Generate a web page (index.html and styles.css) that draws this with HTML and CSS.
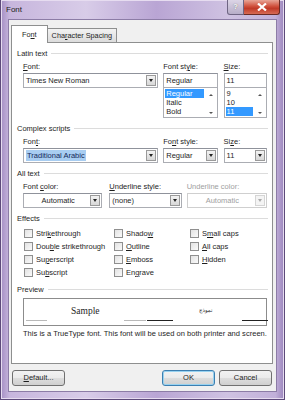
FILE: index.html
```html
<!DOCTYPE html>
<html lang="en">

<head>
    <meta charset="UTF-8">
    <title>Font</title>
    <link rel="stylesheet" href="styles.css">
</head>

<body>
    <div class="window">
        <div class="titlebar">
            <span class="title">Font</span>
            <div class="caption-btns">
                <span class="help">?</span>
                <span class="close">
                    <svg width="10" height="8" viewBox="0 0 10 8">
                        <path d="M1 0.5 L9 7.5 M9 0.5 L1 7.5" stroke="#fff" stroke-width="2.2" />
                    </svg>
                </span>
            </div>
        </div>

        <div class="client">
            <div class="tabs">
                <div class="tab active">Fo<u>n</u>t</div>
                <div class="tab">Cha<u>r</u>acter Spacing</div>
            </div>

            <div class="panel">
                <!-- Latin text -->
                <div class="heading">Latin text</div>
                <div class="row">
                    <div class="field f-font">
                        <div class="label"><u>F</u>ont:</div>
                        <div class="select">
                            <span class="value">Times New Roman</span>
                            <span class="drop"></span>
                        </div>
                    </div>
                    <div class="field f-style">
                        <div class="label">Font st<u>y</u>le:</div>
                        <div class="textbox">Regular</div>
                        <div class="listbox">
                            <div class="items">
                                <div class="item selected">Regular</div>
                                <div class="item">Italic</div>
                                <div class="item">Bold</div>
                            </div>
                            <div class="scroll">
                                <span class="arr up"></span>
                                <span class="arr down"></span>
                            </div>
                        </div>
                    </div>
                    <div class="field f-size">
                        <div class="label"><u>S</u>ize:</div>
                        <div class="textbox">11</div>
                        <div class="listbox">
                            <div class="items">
                                <div class="item">9</div>
                                <div class="item">10</div>
                                <div class="item selected">11</div>
                            </div>
                            <div class="scroll">
                                <span class="arr up"></span>
                                <span class="arr down"></span>
                            </div>
                        </div>
                    </div>
                </div>

                <!-- Complex scripts -->
                <div class="heading">Complex scripts</div>
                <div class="row">
                    <div class="field f-font">
                        <div class="label">Fon<u>t</u>:</div>
                        <div class="select">
                            <span class="value hilite">Traditional Arabic</span>
                            <span class="drop"></span>
                        </div>
                    </div>
                    <div class="field f-style">
                        <div class="label">Fo<u>n</u>t style:</div>
                        <div class="select">
                            <span class="value">Regular</span>
                            <span class="drop"></span>
                        </div>
                    </div>
                    <div class="field f-size">
                        <div class="label">Si<u>z</u>e:</div>
                        <div class="select">
                            <span class="value">11</span>
                            <span class="drop"></span>
                        </div>
                    </div>
                </div>

                <!-- All text -->
                <div class="heading">All text</div>
                <div class="row">
                    <div class="field f-color">
                        <div class="label">Font <u>c</u>olor:</div>
                        <div class="select">
                            <span class="value center">Automatic</span>
                            <span class="drop"></span>
                        </div>
                    </div>
                    <div class="field f-ustyle">
                        <div class="label"><u>U</u>nderline style:</div>
                        <div class="select">
                            <span class="value">(none)</span>
                            <span class="drop"></span>
                        </div>
                    </div>
                    <div class="field f-ucolor disabled">
                        <div class="label">Underline color:</div>
                        <div class="select">
                            <span class="value center">Automatic</span>
                            <span class="drop"></span>
                        </div>
                    </div>
                </div>

                <!-- Effects -->
                <div class="heading">Effects</div>
                <div class="effects">
                    <label class="check"><span class="box"></span>Stri<u>k</u>ethrough</label>
                    <label class="check"><span class="box"></span>Shado<u>w</u></label>
                    <label class="check"><span class="box"></span>S<u>m</u>all caps</label>
                    <label class="check"><span class="box"></span>Dou<u>b</u>le strikethrough</label>
                    <label class="check"><span class="box"></span><u>O</u>utline</label>
                    <label class="check"><span class="box"></span><u>A</u>ll caps</label>
                    <label class="check"><span class="box"></span>Su<u>p</u>erscript</label>
                    <label class="check"><span class="box"></span><u>E</u>mboss</label>
                    <label class="check"><span class="box"></span><u>H</u>idden</label>
                    <label class="check"><span class="box"></span>Su<u>b</u>script</label>
                    <label class="check"><span class="box"></span>En<u>g</u>rave</label>
                </div>

                <!-- Preview -->
                <div class="heading">Preview</div>
                <div class="preview">
                    <span class="rule gray r1"></span>
                    <span class="sample">Sample</span>
                    <span class="rule gray r2"></span>
                    <span class="rule r3"></span>
                    <span class="arabic">نموذج</span>
                    <span class="rule r4"></span>
                </div>
                <div class="note">This is a TrueType font. This font will be used on both printer and screen.</div>
            </div>

            <div class="buttons">
                <button class="btn"><u>D</u>efault...</button>
                <span class="spacer"></span>
                <button class="btn ok">OK</button>
                <button class="btn">Cancel</button>
            </div>
        </div>
    </div>
</body>

</html>
```

FILE: styles.css
```css
/* Font dialog */
body {
    margin: 0;
    padding: 0;
    font-family: "Liberation Sans", Arial, sans-serif;
    font-size: 7.5px;
    color: #1e1e1e;
    background: #fff;
}

u {
    text-decoration-thickness: 1px;
    text-underline-offset: 1px;
}

.window {
    width: 285px;
    height: 400px;
    box-sizing: border-box;
    padding: 0 7px 7px 7px;
    display: flex;
    flex-direction: column;
    background: linear-gradient(90deg, #a58fc4 0%, #c7b6dd 3%, #d8cce8 30%, #b9a5d4 55%, #cfc2e2 80%, #c1b0d9 97%, #9c86bd 100%);
    border: 1px solid #5d4a7a;
    border-top: none;
    box-shadow: inset 0 0 0 1px #e6dcf0;
}

/* Title bar */
.titlebar {
    height: 20px;
    display: flex;
    align-items: center;
    position: relative;
}

.title {
    font-size: 8px;
    color: #222;
    margin-left: -2px;
}

.caption-btns {
    position: absolute;
    right: -3px;
    top: 0;
    display: flex;
}

.help {
    width: 17px;
    height: 15px;
    box-sizing: border-box;
    border: 1px solid #6f6583;
    border-top: none;
    border-radius: 0 0 0 3px;
    background: linear-gradient(#dcd5e6, #b7adc8);
    color: #fff;
    font-weight: bold;
    font-size: 8px;
    text-align: center;
    line-height: 14px;
    text-shadow: 0 0 1px #555;
}

.close {
    width: 36px;
    height: 15px;
    box-sizing: border-box;
    border: 1px solid #6b2a24;
    border-left: none;
    border-top: none;
    border-radius: 0 0 3px 0;
    background: linear-gradient(#e8a597, #d0503c 45%, #c03a28 60%, #d66a55);
    display: flex;
    align-items: center;
    justify-content: center;
}

/* Client area */
.client {
    flex: 1;
    background: #f0f0f0;
    border: 1px solid #8c7ca6;
    padding: 5px 3px 0 2px;
    display: flex;
    flex-direction: column;
}

.tabs {
    display: flex;
    align-items: flex-end;
    height: 17px;
    margin-left: 1px;
}

.tab {
    height: 13px;
    line-height: 13px;
    padding: 0 4px;
    border: 1px solid #8e8f8f;
    border-bottom: none;
    background: linear-gradient(#f2f2f2, #dcdcdc);
    margin-left: -1px;
    font-size: 7.3px;
}

.tab.active {
    height: 17px;
    line-height: 17px;
    padding: 0 10px;
    background: #fff;
    position: relative;
    z-index: 1;
    margin-bottom: -1px;
}

.panel {
    height: 322px;
    box-sizing: border-box;
    background: #fff;
    border: 1px solid #8e8f8f;
    padding: 4px 5px 0 5px;
}

.heading {
    display: flex;
    align-items: center;
    height: 12px;
    margin-top: 4px;
    color: #1e1e1e;
}

.panel > .heading:first-child {
    margin-top: 0;
}

.heading::after {
    content: "";
    flex: 1;
    height: 1px;
    background: #dcdcdc;
    margin-left: 4px;
    margin-right: -1px;
}

.row {
    display: flex;
    margin-top: 3px;
    padding-left: 6px;
}

.label {
    height: 10px;
    line-height: 10px;
    margin-bottom: 1px;
}

.f-font { width: 137px; margin-right: 5px; }
.f-style { width: 55px; margin-right: 6px; }
.f-size { width: 44px; }
.f-color { width: 80px; margin-right: 7px; }
.f-ustyle { width: 73px; margin-right: 5px; }
.f-ucolor { width: 81px; }

.select,
.textbox {
    height: 15px;
    box-sizing: border-box;
    border: 1px solid #abadb3;
    border-top-color: #8f929b;
    background: #fff;
    display: flex;
    align-items: center;
    padding-left: 2px;
    white-space: nowrap;
    overflow: hidden;
}

.select .value {
    flex: 1;
    line-height: 11px;
}

.select .value.center {
    text-align: center;
}

.select .value.hilite {
    flex: none;
    background: #a8cdf1;
    color: #14285a;
    padding: 0 1px;
    margin-right: auto;
}

.drop {
    width: 10px;
    height: 11px;
    box-sizing: border-box;
    margin-right: 1px;
    border: 1px solid #9a9a9a;
    background: linear-gradient(#f3f3f3, #d7d7d7);
    position: relative;
}

.drop::after {
    content: "";
    position: absolute;
    left: 2px;
    top: 3px;
    border-left: 2px solid transparent;
    border-right: 2px solid transparent;
    border-top: 3px solid #222;
}

.disabled .label,
.disabled .value {
    color: #a0a0a0;
}

.disabled .select {
    border-color: #cfcfcf;
}

.disabled .drop {
    border-color: #d5d5d5;
    background: #f4f4f4;
}

.disabled .drop::after {
    border-top-color: #aaa;
}

.listbox {
    height: 30px;
    box-sizing: border-box;
    border: 1px solid #abadb3;
    border-top: none;
    display: flex;
    background: #fff;
}

.listbox .items {
    flex: 1;
    padding: 1px 0 0 1px;
}

.item {
    height: 9px;
    line-height: 9px;
    padding-left: 1px;
}

.item.selected {
    background: #3399ff;
    color: #fff;
    margin-right: 1px;
}

.scroll {
    width: 12px;
    display: flex;
    flex-direction: column;
    justify-content: space-between;
    align-items: center;
    padding: 6px 0 3px;
}

.arr {
    width: 0;
    height: 0;
    border-left: 2px solid transparent;
    border-right: 2px solid transparent;
}

.arr.up { border-bottom: 2px solid #555; }
.arr.down { border-top: 2px solid #555; }

/* Effects */
.effects {
    display: grid;
    grid-template-columns: 90px 76px auto;
    grid-auto-rows: 13px;
    margin-top: 3px;
    padding-left: 7px;
}

.check {
    display: flex;
    align-items: center;
    white-space: nowrap;
}

.box {
    width: 7px;
    height: 7px;
    border: 1px solid #8f8f8f;
    background: linear-gradient(135deg, #e2e2e2, #fafafa);
    margin-right: 3px;
}

/* Preview */
.preview {
    height: 28px;
    box-sizing: border-box;
    margin: 3px 0 0 6px;
    border: 1px solid #8c8c8c;
    position: relative;
    font-family: "Liberation Serif", "Times New Roman", serif;
}

.rule {
    position: absolute;
    top: 21px;
    height: 1px;
    background: #222;
}

.rule.gray {
    background: #b9b9b9;
}

.r1 { left: 2px; width: 21px; }
.r2 { left: 100px; width: 22px; }
.r3 { left: 123px; width: 26px; }
.r4 { left: 218px; width: 26px; }

.sample {
    position: absolute;
    left: 47px;
    top: 7px;
    font-size: 9.5px;
}

.arabic {
    position: absolute;
    left: 175px;
    top: 8px;
    font-size: 5.5px;
    font-family: "DejaVu Sans", serif;
}

.note {
    margin: 3px 0 0 6px;
    line-height: 10px;
    white-space: nowrap;
    letter-spacing: 0.03px;
}

/* Buttons */
.buttons {
    display: flex;
    align-items: center;
    height: 27px;
    padding: 0 1px;
}

.spacer {
    flex: 1;
}

.btn {
    width: 53px;
    height: 16px;
    padding: 0;
    font-family: inherit;
    font-size: 7.5px;
    color: #1e1e1e;
    border: 1px solid #707070;
    border-radius: 3px;
    background: linear-gradient(#f2f2f2 0%, #ebebeb 48%, #dddddd 52%, #cfcfcf 100%);
    margin-left: 4px;
}

.btn:first-child {
    margin-left: 0;
}

.btn.ok {
    border-color: #3c7fb1;
    box-shadow: inset 0 0 0 1px #98d2f0;
}
```
